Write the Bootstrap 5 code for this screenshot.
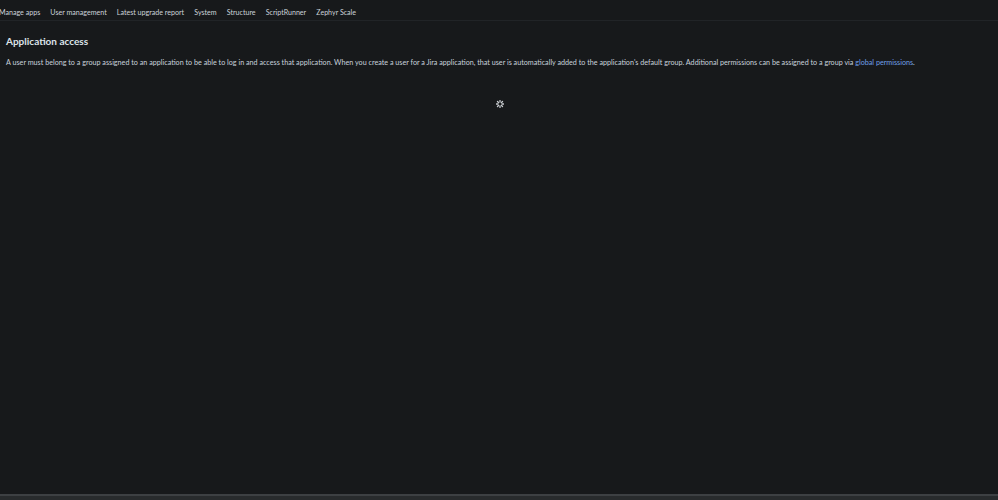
<!DOCTYPE html>
<html lang="en">
<head>
<meta charset="utf-8">
<title>Application access</title>
<link href="https://cdn.jsdelivr.net/npm/bootstrap@5.3.0/dist/css/bootstrap.min.css" rel="stylesheet">
<style>
html,body{height:100%}
body{background:#17191b;color:#c7d1db;font-family:Lato,"Liberation Sans",sans-serif;font-size:7.2px;overflow:hidden}
.shell{height:500px}
.topbar{height:21px;padding-top:5px;border-bottom:1px solid #212427;column-gap:10.1px;margin-left:-1px}
.topbar a{color:#ccd3da;font-size:7.1px;text-decoration:none;line-height:1}
.main-area{padding:0 6px}
.page-title{color:#dde3e9;font-size:10px;font-weight:700;line-height:14px;margin:13px 0 0}
.intro{color:#c7d1db;font-size:7.2px;line-height:10px;margin:10px 0 0;white-space:nowrap}
.intro a{color:#6f9fe6;text-decoration:none}
.spin-row{margin-top:32px;padding-left:2px}
.spin-icon{width:8px;height:8px;display:block}
.footer-bar{height:6px;background:#282b2d;border-top:2px solid #3d4043}
</style>
</head>
<body>
<div class="shell d-flex flex-column">
  <nav class="topbar d-flex align-items-center">
    <a href="#">Manage apps</a><a href="#">User management</a><a href="#">Latest upgrade report</a><a href="#">System</a><a href="#">Structure</a><a href="#">ScriptRunner</a><a href="#">Zephyr Scale</a>
  </nav>
  <main class="main-area flex-grow-1">
    <h1 class="page-title">Application access</h1>
    <p class="intro">A user must belong to a group assigned to an application to be able to log in and access that application. When you create a user for a Jira application, that user is automatically added to the application's default group. Additional permissions can be assigned to a group via <a href="#">global permissions</a>.</p>
    <div class="spin-row d-flex justify-content-center">
      <svg class="spin-icon" viewBox="0 0 16 16" fill="none" stroke="#c9cdd1" stroke-width="2.6" stroke-linecap="round"><path d="M8 1v3M8 12v3M1 8h3M12 8h3M3 3l2 2M11 11l2 2M3 13l2-2M11 5l2-2"/></svg>
    </div>
  </main>
  <div class="footer-bar"></div>
</div>
<script src="https://cdn.jsdelivr.net/npm/bootstrap@5.3.0/dist/js/bootstrap.bundle.min.js"></script>
</body>
</html>
